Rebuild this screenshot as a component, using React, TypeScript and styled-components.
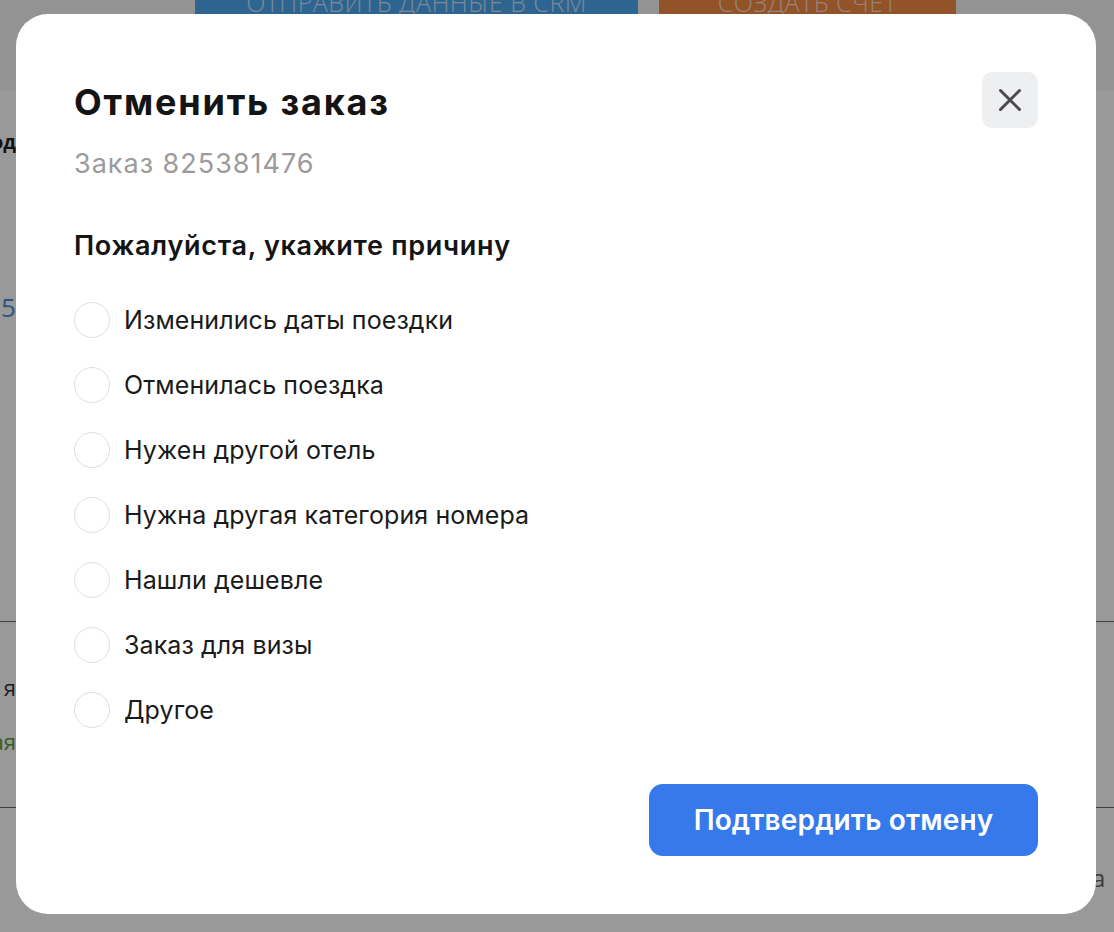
import { useState } from "react";
import styled, { createGlobalStyle } from "styled-components";

const GlobalStyle = createGlobalStyle`
  html, body {
    margin: 0;
    padding: 0;
    background: #ffffff;
    font-family: Inter, "Noto Sans", "Liberation Sans", sans-serif;
  }
  * {
    box-sizing: border-box;
  }
`;

const Page = styled.div`
  display: flex;
  flex-direction: column;
  width: 1114px;
  height: 932px;
  overflow: hidden;
  background: #ffffff;
`;

const TopBar = styled.div`
  display: flex;
  gap: 21px;
  height: 90px;
  padding-left: 195px;
  background: #f6f6f7;
  overflow: hidden;
`;

const TopButton = styled.div<{ $bg: string; $w: number }>`
  display: flex;
  align-items: flex-end;
  justify-content: center;
  width: ${(p) => p.$w}px;
  height: 70px;
  margin-top: -46px;
  padding-bottom: 7px;
  background: ${(p) => p.$bg};
  color: rgba(255, 255, 255, 0.72);
  font-family: "Open Sans", sans-serif;
  font-size: 25px;
  line-height: 1.2;
  font-weight: 300;
  letter-spacing: 0.5px;
`;

const Section = styled.div<{ $h: number; $line?: boolean }>`
  display: flex;
  justify-content: space-between;
  height: ${(p) => p.$h}px;
  border-bottom: ${(p) => (p.$line ? "1px solid #6a6a6a" : "none")};
`;

const EdgeColumn = styled.div`
  display: flex;
  flex-direction: column;
  align-items: flex-end;
  width: 16px;
`;

const EdgeText = styled.div<{ $top: number; $color: string; $size: number; $bold?: boolean }>`
  margin-top: ${(p) => p.$top}px;
  color: ${(p) => p.$color};
  font-size: ${(p) => p.$size}px;
  font-weight: ${(p) => (p.$bold ? 700 : 400)};
  font-family: "Open Sans", sans-serif;
  white-space: nowrap;
  line-height: 1.2;
`;

const RightColumn = styled.div`
  display: flex;
  flex-direction: column;
  width: 22px;
`;

const Overlay = styled.div`
  position: fixed;
  inset: 0;
  display: flex;
  align-items: flex-start;
  justify-content: flex-start;
  padding: 14px 0 0 16px;
  background: rgba(0, 0, 0, 0.4);
`;

const Modal = styled.div`
  display: flex;
  flex-direction: column;
  width: 1080px;
  padding: 58px;
  background: #ffffff;
  border-radius: 32px;
`;

const Header = styled.div`
  display: flex;
  justify-content: space-between;
  align-items: flex-start;
`;

const TitleBlock = styled.div`
  display: flex;
  flex-direction: column;
`;

const Title = styled.h2`
  margin: 10px 0 0;
  font-size: 36px;
  line-height: 40px;
  font-weight: 700;
  color: #141414;
  letter-spacing: 1.8px;
`;

const Subtitle = styled.div`
  margin-top: 26px;
  font-size: 27px;
  line-height: 32px;
  color: #9b9b9b;
  letter-spacing: 1px;
`;

const CloseButton = styled.button`
  display: flex;
  align-items: center;
  justify-content: center;
  width: 56px;
  height: 56px;
  padding: 0;
  border: none;
  border-radius: 10px;
  background: #eeeff1;
  cursor: pointer;
`;

const Question = styled.div`
  margin-top: 50px;
  font-size: 27px;
  line-height: 32px;
  font-weight: 600;
  color: #141414;
  letter-spacing: 0.7px;
`;

const Options = styled.div`
  display: flex;
  flex-direction: column;
  gap: 29px;
  margin-top: 40px;
`;

const Option = styled.label`
  display: flex;
  align-items: center;
  gap: 14px;
  height: 36px;
  cursor: pointer;
`;

const Radio = styled.span<{ $checked: boolean }>`
  flex: none;
  width: 36px;
  height: 36px;
  border-radius: 50%;
  border: ${(p) => (p.$checked ? "11px solid #3579ea" : "1px solid #dedede")};
  background: #ffffff;
`;

const OptionText = styled.span`
  font-size: 25px;
  line-height: 30px;
  color: #1a1a1a;
  letter-spacing: 0.1px;
`;

const Footer = styled.div`
  display: flex;
  justify-content: flex-end;
  margin-top: 56px;
`;

const ConfirmButton = styled.button`
  width: 389px;
  height: 72px;
  border: none;
  border-radius: 14px;
  background: #3579ea;
  color: #ffffff;
  font-family: Inter, "Noto Sans", sans-serif;
  font-size: 28px;
  font-weight: 600;
  letter-spacing: 0.15px;
  cursor: pointer;
`;

const reasons = [
  "Изменились даты поездки",
  "Отменилась поездка",
  "Нужен другой отель",
  "Нужна другая категория номера",
  "Нашли дешевле",
  "Заказ для визы",
  "Другое",
];

export default function App() {
  const [selected, setSelected] = useState<number | null>(null);

  return (
    <>
      <GlobalStyle />
      <Page>
        <TopBar>
          <TopButton $bg="#4ea8f0" $w={443}>ОТПРАВИТЬ ДАННЫЕ В CRM</TopButton>
          <TopButton $bg="#f58a43" $w={297}>СОЗДАТЬ СЧЕТ</TopButton>
        </TopBar>
        <Section $h={532} $line>
          <EdgeColumn>
            <EdgeText $top={41} $color="#222" $size={19} $bold>
              Метод
            </EdgeText>
            <EdgeText $top={138} $color="#4a90d9" $size={26}>
              №835
            </EdgeText>
          </EdgeColumn>
        </Section>
        <Section $h={186} $line>
          <EdgeColumn>
            <EdgeText $top={52} $color="#333" $size={22}>
              Статус заказа: оплачена я
            </EdgeText>
            <EdgeText $top={28} $color="#5a9a3a" $size={22}>
              Оплачена ая
            </EdgeText>
          </EdgeColumn>
        </Section>
        <Section $h={124}>
          <span />
          <RightColumn>
            <EdgeText $top={56} $color="#666" $size={24}>
              а
            </EdgeText>
          </RightColumn>
        </Section>
      </Page>
      <Overlay>
        <Modal>
          <Header>
            <TitleBlock>
              <Title>Отменить заказ</Title>
              <Subtitle>Заказ 825381476</Subtitle>
            </TitleBlock>
            <CloseButton aria-label="Закрыть">
              <svg width="24" height="24" viewBox="0 0 24 24" fill="none">
                <path
                  d="M2.5 2.5L21.5 21.5M21.5 2.5L2.5 21.5"
                  stroke="#4a4a4c"
                  strokeWidth="3"
                  strokeLinecap="round"
                />
              </svg>
            </CloseButton>
          </Header>
          <Question>Пожалуйста, укажите причину</Question>
          <Options>
            {reasons.map((r, i) => (
              <Option key={r} onClick={() => setSelected(i)}>
                <Radio $checked={selected === i} />
                <OptionText>{r}</OptionText>
              </Option>
            ))}
          </Options>
          <Footer>
            <ConfirmButton>Подтвердить отмену</ConfirmButton>
          </Footer>
        </Modal>
      </Overlay>
    </>
  );
}
